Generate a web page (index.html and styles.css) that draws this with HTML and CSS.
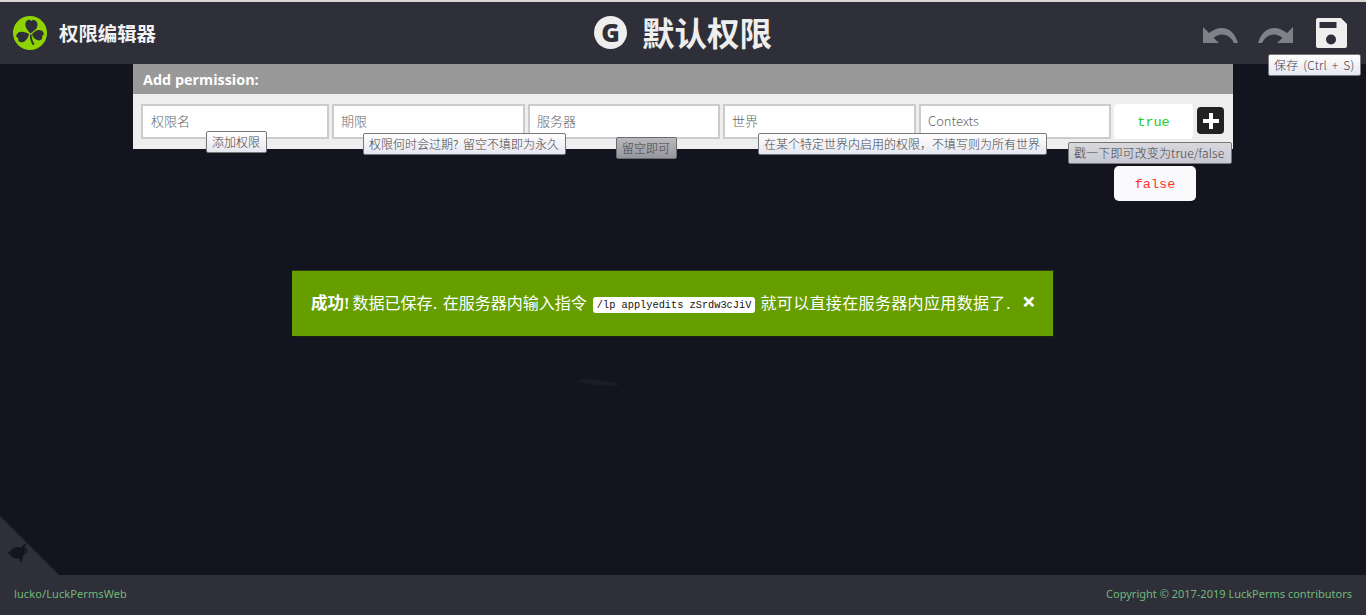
FILE: index.html
```html
<!DOCTYPE html>
<html lang="zh">
<head>
<meta charset="utf-8">
<title>权限编辑器</title>
<link rel="stylesheet" href="styles.css">
</head>
<body>
<div class="app">
  <header class="topbar">
    <div class="brand">
      <svg class="logo" viewBox="0 0 36 36" aria-hidden="true">
        <circle cx="18" cy="18" r="18" fill="#8fd400"/>
        <g fill="#2f2f39" transform="translate(18 17.500) scale(1.080) translate(-18 -17.500)">
          <path d="M18.500 18.500c-2-2.400-4.600-4.500-5-7.800-.4-3.300 1.700-6 3.700-5.700 1 .1 1.600.7 2 1.300.6-.7 1.500-1.300 2.700-1.100 2.300.4 4 3 3.300 6.200-.6 3.200-4.300 5-6.700 7.100z"/>
          <path d="M17 19c-2.800-1.600-5.800-2.700-8.800-2-2.800.7-4.300 3.200-3.300 5 .5.800 1.100 1 1.800 1.100-.4.800-.6 1.800.2 2.800 1.400 1.700 4.200 1.700 6.500-.3 2.500-2.200 3-4.300 3.600-6.600z"/>
          <path d="M20 19c1.900-2.600 4.500-4.300 7.600-4 3 .3 4.700 3 3.600 4.900-.4.700-1 .9-1.500 1.100.3.700.6 1.700 0 2.700-1.300 1.800-4 2.100-6.300.4-2.400-1.700-3-3-3.400-5.100z"/>
          <path d="M18 19.500h1.500c.3 3.300.7 6.300 3 9.300l-1.600 1.200c-2.400-3.200-3-6.700-2.900-10.500z"/>
        </g>
      </svg>
      <span class="app-name">权限编辑器</span>
    </div>
    <h1 class="page-title">
      <span class="group-badge">G</span>
      <span>默认权限</span>
    </h1>
    <div class="actions">
      <svg class="act-icon" viewBox="0 0 35 16" aria-hidden="true">
        <path d="M0 0V16H16L10.500 10.800C13 8.800 16 7.500 19 7.500 24 7.500 28.500 10.500 31 16H35C32 6 26 1 19 1 14 1 10 3 6 6Z" fill="#808088"/>
      </svg>
      <svg class="act-icon redo" viewBox="0 0 35 16" aria-hidden="true">
        <path d="M0 0V16H16L10.500 10.800C13 8.800 16 7.500 19 7.500 24 7.500 28.500 10.500 31 16H35C32 6 26 1 19 1 14 1 10 3 6 6Z" fill="#808088"/>
      </svg>
      <svg class="save-icon" viewBox="0 0 31 30" aria-hidden="true">
        <path d="M2 0h23l6 6v22a2 2 0 0 1-2 2H2a2 2 0 0 1-2-2V2a2 2 0 0 1 2-2z" fill="#eee"/>
        <rect x="3.500" y="4" width="17" height="6" fill="#2f2f39"/>
        <circle cx="15" cy="21.500" r="5" fill="#2f2f39"/>
      </svg>
    </div>
    <div class="tip tip-save">保存 (Ctrl + S)</div>
  </header>

  <main class="content">
    <section class="panel">
      <h2 class="panel-head">Add permission:</h2>
      <div class="panel-row">
        <input class="field f-a" placeholder="权限名">
        <input class="field f-b" placeholder="期限">
        <input class="field f-c" placeholder="服务器">
        <input class="field f-d" placeholder="世界">
        <input class="field f-e" placeholder="Contexts">
        <div class="toggle">true</div>
        <button class="add" aria-label="add">
          <svg viewBox="0 0 18 18" width="18" height="18" aria-hidden="true"><path d="M7 1h4v6h6v4h-6v6H7v-6H1V7h6z" fill="#fff"/></svg>
        </button>
      </div>
      <div class="toggle-opt">false</div>
      <div class="tip tip-1">添加权限</div>
      <div class="tip tip-2">权限何时会过期? 留空不填即为永久</div>
      <div class="tip tip-3 fading">留空即可</div>
      <div class="tip tip-4">在某个特定世界内启用的权限，不填写则为所有世界</div>
      <div class="tip tip-5 fading-soft">戳一下即可改变为true/false</div>
    </section>

    <div class="alert">
      <p class="alert-text"><strong>成功!</strong> 数据已保存. 在服务器内输入指令 <code>/lp applyedits zSrdw3cJiV</code> <span class="alert-tail">就可以直接在服务器内应用数据了.</span></p>
      <span class="alert-close">×</span>
    </div>
    <div class="smudge"></div>
  </main>

  <div class="corner">
    <svg viewBox="0 0 30 30" width="26" height="26" aria-hidden="true">
      <path d="M1 13l5-5c3-2.500 7-3 10-1.500l3-3 4-2.500-1 2.500-2 3c2 3 1.500 7-1.500 9.500l-.5 4-2.500 4-1.500-5c-4 .5-8-.5-9.500-3.500z" fill="#14141f"/>
      <path d="M21 7c2 1 2.500 4 1 6" fill="none" stroke="#14141f" stroke-width="1.200"/>
    </svg>
  </div>

  <footer class="footer">
    <a class="foot-link foot-left">lucko/LuckPermsWeb</a>
    <span class="foot-link">Copyright © 2017-2019 LuckPerms contributors</span>
  </footer>
</div>
</body>
</html>
```

FILE: styles.css
```css
* { box-sizing: border-box; }
html, body { margin: 0; height: 100%; overflow: hidden; }
body {
  font-family: "Noto Sans", "Noto Sans CJK SC", sans-serif;
  background: #141420;
}
.app {
  position: relative;
  display: flex;
  flex-direction: column;
  height: 615px;
  border-top: 2px solid #d9d6d2;
}
.topbar {
  position: relative;
  flex: 0 0 62px;
  display: flex;
  align-items: center;
  justify-content: space-between;
  background: #2f2f39;
  padding: 0 19px 0 13px;
}
.brand { display: flex; align-items: center; gap: 12px; }
.logo { width: 34px; height: 34px; }
.app-name {
  font: 700 19.400px/1 "Noto Sans CJK SC", sans-serif;
  color: #f2f2f2;
}
.page-title {
  position: absolute;
  left: 594px;
  top: 10px;
  margin: 0;
  display: flex;
  align-items: center;
  gap: 15px;
  font: 700 32.500px/40px "Noto Sans CJK SC", sans-serif;
  color: #eee;
}
.group-badge {
  width: 33px;
  height: 33px;
  border-radius: 50%;
  background: #eee;
  color: #2f2f39;
  text-align: center;
  font: 800 25px/33px "Open Sans", sans-serif;
}
.actions { display: flex; align-items: center; }
.act-icon { width: 35px; height: 16px; margin: 4px 20px 0 0; }
.redo { transform: scaleX(-1); margin-right: 23px; }
.save-icon { width: 31px; height: 30px; }

.content {
  position: relative;
  flex: 1;
  display: flex;
  flex-direction: column;
  align-items: center;
}
.panel {
  position: relative;
  width: 1100px;
  background: #eee;
}
.panel-head {
  margin: 0;
  height: 30px;
  padding: 0 10px;
  background: #999;
  color: #fff;
  font: 700 14.400px/31px "Open Sans", "Noto Sans", sans-serif;
}
.panel-row {
  height: 55px;
  padding: 10px 9px 10px 8px;
  display: flex;
  align-items: flex-start;
}
.field {
  height: 35px;
  border: 2px solid #ccc;
  background: #fff;
  padding: 0 7px 2px;
  font: 300 13px "Noto Sans CJK SC", "Noto Sans", sans-serif;
  color: #555;
  outline: 0;
  border-radius: 0;
}
.field::placeholder { color: #666; opacity: 1; }
.f-a { width: 188px; margin-right: 3px; padding-left: 8px; }
.f-b { width: 193px; margin-right: 3px; }
.f-c { width: 192px; margin-right: 3px; }
.f-d { width: 193px; margin-right: 3px; }
.f-e { width: 192px; margin-right: 3px; }
.toggle {
  width: 79px;
  height: 35px;
  background: #fff;
  border-radius: 4px;
  color: #22cc22;
  text-align: center;
  font: 13.500px/38px "Liberation Mono", monospace;
}
.add {
  width: 27px;
  height: 27px;
  margin: 3px 0 0 4px;
  padding: 0;
  border: 0;
  border-radius: 4px;
  background: #222;
  display: flex;
  align-items: center;
  justify-content: center;
}
.toggle-opt {
  position: absolute;
  left: 981px;
  top: 102px;
  width: 82px;
  height: 35px;
  background: #fafafc;
  border-radius: 5px;
  color: #ff3333;
  text-align: center;
  font: 13.500px/37px "Liberation Mono", monospace;
}
.tip {
  position: absolute;
  height: 22px;
  padding: 0 5px;
  border: 1px solid #777;
  border-radius: 2px;
  background: linear-gradient(#fff, #e6e6f2);
  color: #444;
  font: 300 12px/20px "Noto Sans CJK SC", "Noto Sans", sans-serif;
  white-space: nowrap;
}
.fading { background: linear-gradient(#b8b8bc, #96969e); border-color: #6a6a70; color: #444; }
.fading-soft { background: linear-gradient(#d8d8dc, #c8c8d4); color: #444; }
.tip-save { left: 1268px; top: 52px; width: 93px; word-spacing: 2px; letter-spacing: .2px; }
.tip-1 { left: 73px; top: 67px; width: 61px; }
.tip-2 { left: 230px; top: 69px; width: 203px; word-spacing: 2px; }
.tip-3 { left: 483px; top: 73px; width: 61px; }
.tip-4 { left: 625px; top: 69px; width: 289px; }
.tip-5 { left: 935px; top: 78px; width: 164px; letter-spacing: .14px; }

.alert {
  position: relative;
  width: 762px;
  height: 66px;
  margin: 122px 20px 0 0;
  padding: 0 19px;
  background: #669e00;
  border: 1px solid #14220a;
  border-width: 0 1px 1px 0;
  box-shadow: 0 -1px 0 #2a3d0a;
  display: flex;
  align-items: center;
  color: #fff;
}
.alert-text {
  margin: 0;
  padding-top: 2px;
  font: 16px/1 "DejaVu Sans", "Noto Sans CJK SC", sans-serif;
  white-space: nowrap;
}
.alert-text strong {
  margin-right: -2px;
  font: 700 16.500px/1 "Liberation Serif", "Noto Sans CJK SC", serif;
}
.alert-text code {
  display: inline-block;
  padding: 1px 4px;
  margin-left: 1px;
  background: #fff;
  color: #111;
  border-radius: 3px;
  font: 10.300px/14px "Liberation Mono", monospace;
  vertical-align: 1px;
}
.alert-tail { letter-spacing: .35px; }
.alert-close {
  position: absolute;
  left: 730px;
  top: 18px;
  font: 700 24px/24px "Open Sans", sans-serif;
}
.smudge {
  position: absolute;
  left: 577px;
  top: 316px;
  width: 42px;
  height: 5px;
  border-radius: 50%;
  background: #1e1e29;
  transform: rotate(6deg);
  opacity: .8;
}
.corner {
  position: absolute;
  left: 0;
  bottom: 40px;
  width: 59px;
  height: 59px;
  background: #2f2f39;
  clip-path: polygon(0 0, 100% 100%, 0 100%);
}
.corner svg { position: absolute; left: 7px; top: 26px; }
.footer {
  flex: 0 0 40px;
  display: flex;
  align-items: center;
  justify-content: space-between;
  padding: 0 14px 3px;
  background: #2f2f39;
  color: #6fb87a;
  font: 11px/1 "Noto Sans", sans-serif;
}
.foot-left { letter-spacing: .1px; }
```
